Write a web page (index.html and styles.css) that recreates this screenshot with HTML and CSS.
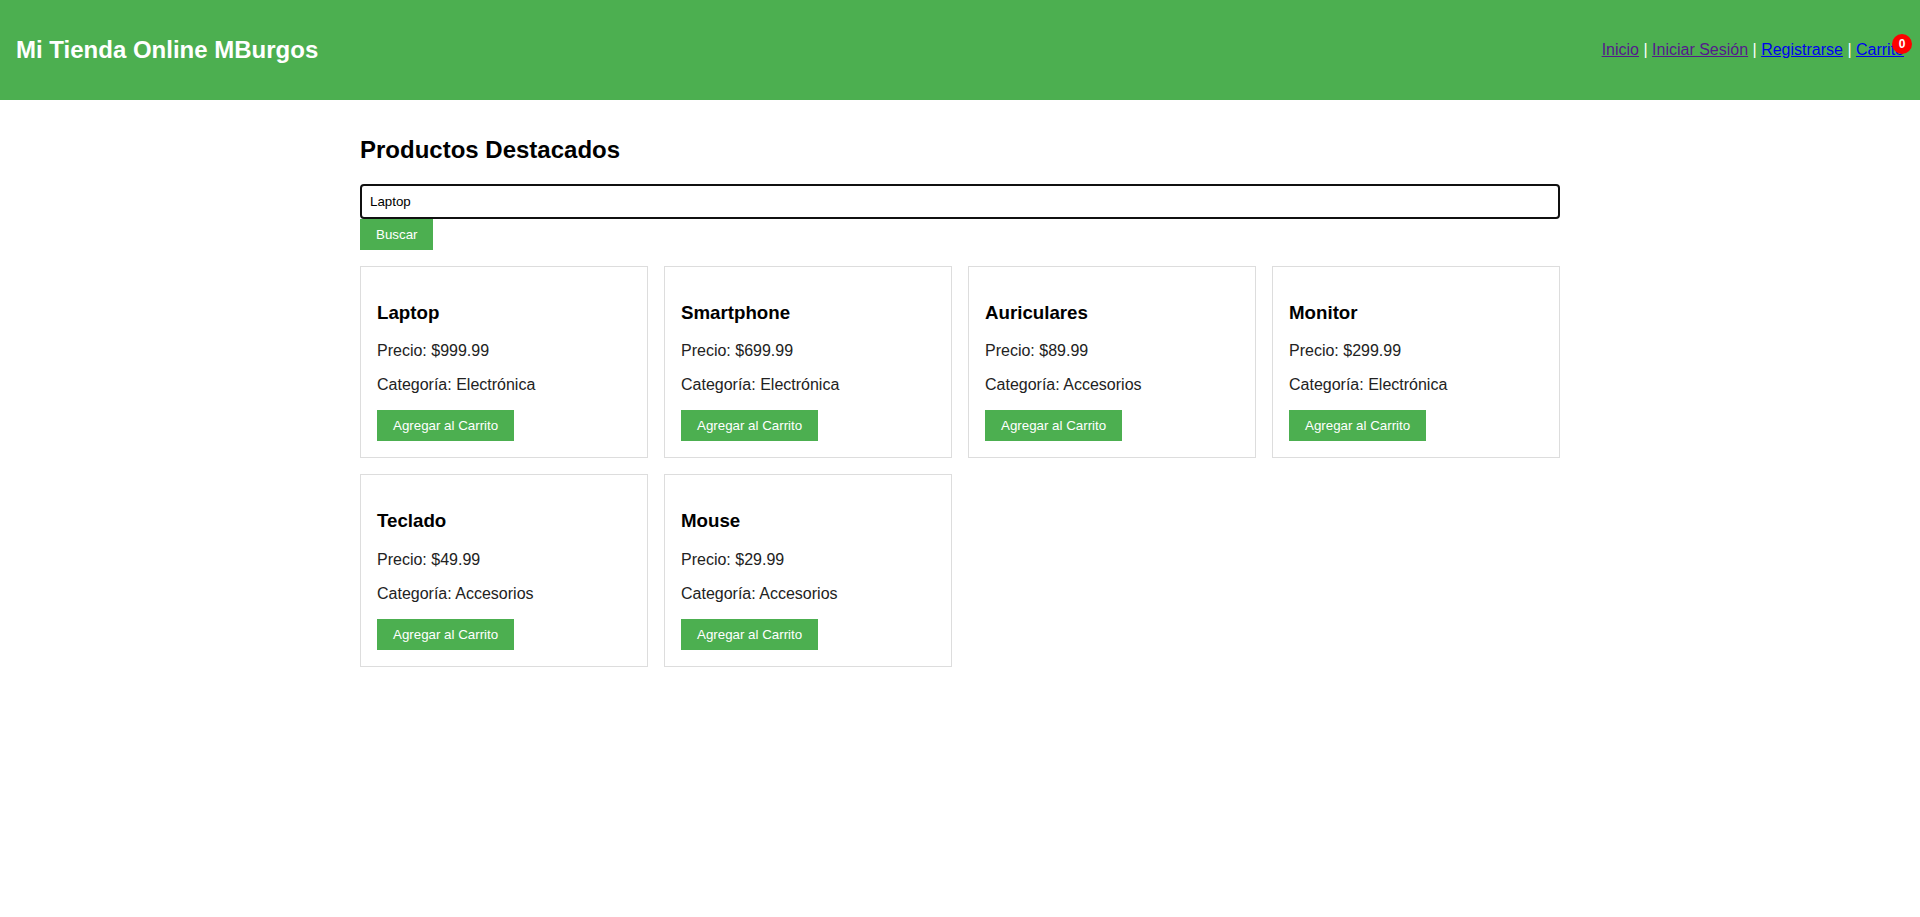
FILE: index.html
```html
<!DOCTYPE html>
<html lang="es">
<head>
<meta charset="UTF-8">
<title>Mi Tienda Online MBurgos</title>
<link rel="stylesheet" href="styles.css">
</head>
<body>
<header class="site-header">
  <h1 class="brand">Mi Tienda Online MBurgos</h1>
  <nav class="nav">
    <a href="#" class="link visited">Inicio</a> | <a href="#" class="link visited">Iniciar Sesión</a> | <a href="#" class="link">Registrarse</a> | <a href="#" class="link cart">Carrito<span class="badge">0</span></a>
  </nav>
</header>
<main class="container">
  <h2 class="section-title">Productos Destacados</h2>
  <div class="search">
    <input class="search-input" type="text" value="Laptop">
    <button class="btn">Buscar</button>
  </div>
  <div class="grid">
    <div class="card">
      <h3>Laptop</h3>
      <p>Precio: $999.99</p>
      <p>Categoría: Electrónica</p>
      <button class="btn">Agregar al Carrito</button>
    </div>
    <div class="card">
      <h3>Smartphone</h3>
      <p>Precio: $699.99</p>
      <p>Categoría: Electrónica</p>
      <button class="btn">Agregar al Carrito</button>
    </div>
    <div class="card">
      <h3>Auriculares</h3>
      <p>Precio: $89.99</p>
      <p>Categoría: Accesorios</p>
      <button class="btn">Agregar al Carrito</button>
    </div>
    <div class="card">
      <h3>Monitor</h3>
      <p>Precio: $299.99</p>
      <p>Categoría: Electrónica</p>
      <button class="btn">Agregar al Carrito</button>
    </div>
    <div class="card">
      <h3>Teclado</h3>
      <p>Precio: $49.99</p>
      <p>Categoría: Accesorios</p>
      <button class="btn">Agregar al Carrito</button>
    </div>
    <div class="card">
      <h3>Mouse</h3>
      <p>Precio: $29.99</p>
      <p>Categoría: Accesorios</p>
      <button class="btn">Agregar al Carrito</button>
    </div>
  </div>
</main>
</body>
</html>
```

FILE: styles.css
```css
* { box-sizing: border-box; }
body {
  margin: 0;
  font-family: "Liberation Sans", Arial, sans-serif;
  background: #fff;
  color: #000;
}
.site-header {
  background: #4CAF50;
  color: #fff;
  padding: 20px 16px;
  display: flex;
  justify-content: space-between;
  align-items: center;
}
.brand {
  font-size: 24px;
  margin: 16px 0;
}
.nav {
  font-size: 16px;
  color: #fff;
}
.link { color: #0000EE; text-decoration: underline; }
.link.visited { color: #551A8B; }
.cart { position: relative; }
.badge {
  position: absolute;
  top: -7px;
  right: -8px;
  width: 20px;
  height: 20px;
  border-radius: 50%;
  background: #f00;
  color: #fff;
  font-size: 12px;
  font-weight: bold;
  line-height: 20px;
  text-align: center;
  text-decoration: none;
  display: inline-block;
}
.container {
  max-width: 1200px;
  margin: 0 auto;
  padding-top: 16px;
}
.section-title {
  font-size: 24px;
  margin: 20px 0;
}
.search { display: flex; flex-direction: column; align-items: flex-start; }
.search-input {
  width: 100%;
  height: 35px;
  padding: 8px;
  border: 2px solid #101010;
  border-radius: 4px;
  font-family: "Liberation Sans", Arial, sans-serif;
  font-size: 13.333px;
  color: #000;
  outline: none;
}
.btn {
  background: #4CAF50;
  color: #fff;
  border: none;
  padding: 8px 16px;
  font-family: "Liberation Sans", Arial, sans-serif;
  font-size: 13.333px;
  cursor: pointer;
}
.grid {
  display: grid;
  grid-template-columns: repeat(4, 1fr);
  gap: 16px;
  margin-top: 16px;
}
.card {
  border: 1px solid #ddd;
  padding: 16px;
}
.card h3 {
  font-size: 18.72px;
  margin: 18.72px 0;
}
.card p {
  font-size: 16px;
  margin: 16px 0;
  color: #222;
}
```
